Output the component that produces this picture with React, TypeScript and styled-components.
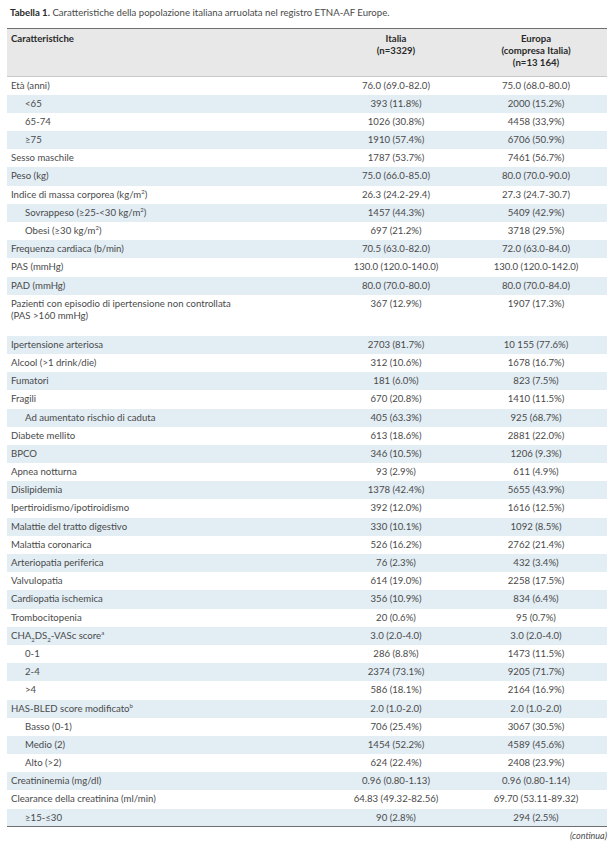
import React from 'react';
import styled, { createGlobalStyle } from 'styled-components';

const GlobalStyle = createGlobalStyle`
  html, body {
    margin: 0;
    padding: 0;
    background: #fff;
  }
  body {
    font-family: Lato, "Open Sans", sans-serif;
    color: #4a4a4a;
  }
`;

const Page = styled.div`
  width: 600px;
  padding: 7px 9px 0 7px;
`;

const Caption = styled.div`
  font-size: 9.6px;
  line-height: 12px;
  padding: 0 0 9px 3px;
  color: #4a4a4a;

  b {
    font-weight: 700;
    color: #2a2a2a;
  }
`;

const Table = styled.table`
  width: 600px;
  border-collapse: collapse;
  table-layout: fixed;
  font-size: 9.6px;
  border-top: 1.5px solid #6f6f6f;
  border-bottom: 1px solid #6f6f6f;
`;

const HeadCell = styled.th<{ $left?: boolean }>`
  background: #e8e8e8;
  font-weight: 700;
  color: #2a2a2a;
  line-height: 12px;
  height: 43px;
  padding: 4px 4px 0;
  vertical-align: top;
  text-align: ${(p) => (p.$left ? 'left' : 'center')};
  border-bottom: 1px solid #c9c9c9;
`;

const Row = styled.tr<{ $tall?: boolean }>`
  height: ${(p) => (p.$tall ? '41px' : '18.2px')};

  &:nth-child(even) {
    background: #e2edf4;
  }
`;

const Label = styled.td<{ $indent?: boolean }>`
  padding: 3px 4px 0 ${(p) => (p.$indent ? '18px' : '4px')};
  vertical-align: top;
  line-height: 12px;
  white-space: pre-line;

  sup,
  sub {
    font-size: 6px;
    line-height: 0;
  }
`;

const Value = styled.td`
  padding: 3px 4px 0;
  vertical-align: top;
  text-align: center;
  line-height: 12px;
`;

const More = styled.div`
  text-align: right;
  font-style: italic;
  font-size: 9px;
  padding-top: 3px;
`;

type Item = { label: React.ReactNode; it: string; eu: string; indent?: boolean; tall?: boolean };

const rows: Item[] = [
  { label: 'Età (anni)', it: '76.0 (69.0-82.0)', eu: '75.0 (68.0-80.0)' },
  { label: '<65', it: '393 (11.8%)', eu: '2000 (15.2%)', indent: true },
  { label: '65-74', it: '1026 (30.8%)', eu: '4458 (33,9%)', indent: true },
  { label: '≥75', it: '1910 (57.4%)', eu: '6706 (50.9%)', indent: true },
  { label: 'Sesso maschile', it: '1787 (53.7%)', eu: '7461 (56.7%)' },
  { label: 'Peso (kg)', it: '75.0 (66.0-85.0)', eu: '80.0 (70.0-90.0)' },
  { label: <>Indice di massa corporea (kg/m<sup>2</sup>)</>, it: '26.3 (24.2-29.4)', eu: '27.3 (24.7-30.7)' },
  { label: <>Sovrappeso (≥25-&lt;30 kg/m<sup>2</sup>)</>, it: '1457 (44.3%)', eu: '5409 (42.9%)', indent: true },
  { label: <>Obesi (≥30 kg/m<sup>2</sup>)</>, it: '697 (21.2%)', eu: '3718 (29.5%)', indent: true },
  { label: 'Frequenza cardiaca (b/min)', it: '70.5 (63.0-82.0)', eu: '72.0 (63.0-84.0)' },
  { label: 'PAS (mmHg)', it: '130.0 (120.0-140.0)', eu: '130.0 (120.0-142.0)' },
  { label: 'PAD (mmHg)', it: '80.0 (70.0-80.0)', eu: '80.0 (70.0-84.0)' },
  { label: 'Pazienti con episodio di ipertensione non controllata\n(PAS >160 mmHg)', it: '367 (12.9%)', eu: '1907 (17.3%)', tall: true },
  { label: 'Ipertensione arteriosa', it: '2703 (81.7%)', eu: '10 155 (77.6%)' },
  { label: 'Alcool (>1 drink/die)', it: '312 (10.6%)', eu: '1678 (16.7%)' },
  { label: 'Fumatori', it: '181 (6.0%)', eu: '823 (7.5%)' },
  { label: 'Fragili', it: '670 (20.8%)', eu: '1410 (11.5%)' },
  { label: 'Ad aumentato rischio di caduta', it: '405 (63.3%)', eu: '925 (68.7%)', indent: true },
  { label: 'Diabete mellito', it: '613 (18.6%)', eu: '2881 (22.0%)' },
  { label: 'BPCO', it: '346 (10.5%)', eu: '1206 (9.3%)' },
  { label: 'Apnea notturna', it: '93 (2.9%)', eu: '611 (4.9%)' },
  { label: 'Dislipidemia', it: '1378 (42.4%)', eu: '5655 (43.9%)' },
  { label: 'Ipertiroidismo/ipotiroidismo', it: '392 (12.0%)', eu: '1616 (12.5%)' },
  { label: 'Malattie del tratto digestivo', it: '330 (10.1%)', eu: '1092 (8.5%)' },
  { label: 'Malattia coronarica', it: '526 (16.2%)', eu: '2762 (21.4%)' },
  { label: 'Arteriopatia periferica', it: '76 (2.3%)', eu: '432 (3.4%)' },
  { label: 'Valvulopatia', it: '614 (19.0%)', eu: '2258 (17.5%)' },
  { label: 'Cardiopatia ischemica', it: '356 (10.9%)', eu: '834 (6.4%)' },
  { label: 'Trombocitopenia', it: '20 (0.6%)', eu: '95 (0.7%)' },
  {
    label: <>CHA<sub>2</sub>DS<sub>2</sub>-VASc score<sup>a</sup></>,
    it: '3.0 (2.0-4.0)',
    eu: '3.0 (2.0-4.0)',
  },
  { label: '0-1', it: '286 (8.8%)', eu: '1473 (11.5%)', indent: true },
  { label: '2-4', it: '2374 (73.1%)', eu: '9205 (71.7%)', indent: true },
  { label: '>4', it: '586 (18.1%)', eu: '2164 (16.9%)', indent: true },
  { label: <>HAS-BLED score modificato<sup>b</sup></>, it: '2.0 (1.0-2.0)', eu: '2.0 (1.0-2.0)' },
  { label: 'Basso (0-1)', it: '706 (25.4%)', eu: '3067 (30.5%)', indent: true },
  { label: 'Medio (2)', it: '1454 (52.2%)', eu: '4589 (45.6%)', indent: true },
  { label: 'Alto (>2)', it: '624 (22.4%)', eu: '2408 (23.9%)', indent: true },
  { label: 'Creatininemia (mg/dl)', it: '0.96 (0.80-1.13)', eu: '0.96 (0.80-1.14)' },
  { label: 'Clearance della creatinina (ml/min)', it: '64.83 (49.32-82.56)', eu: '69.70 (53.11-89.32)' },
  { label: '≥15-≤30', it: '90 (2.8%)', eu: '294 (2.5%)', indent: true },
];

const App = () => (
  <>
    <GlobalStyle />
    <Page>
      <Caption>
        <b>Tabella 1.</b> Caratteristiche della popolazione italiana arruolata nel registro ETNA-AF Europe.
      </Caption>
      <Table>
        <colgroup>
          <col style={{ width: 320 }} />
          <col style={{ width: 138 }} />
          <col style={{ width: 142 }} />
        </colgroup>
        <thead>
          <tr>
            <HeadCell $left>Caratteristiche</HeadCell>
            <HeadCell>
              Italia
              <br />
              (n=3329)
            </HeadCell>
            <HeadCell>
              Europa
              <br />
              (compresa Italia)
              <br />
              (n=13 164)
            </HeadCell>
          </tr>
        </thead>
        <tbody>
          {rows.map((r, i) => (
            <Row key={i} $tall={r.tall}>
              <Label $indent={r.indent}>{r.label}</Label>
              <Value>{r.it}</Value>
              <Value>{r.eu}</Value>
            </Row>
          ))}
        </tbody>
      </Table>
      <More>(continua)</More>
    </Page>
  </>
);

export default App;
